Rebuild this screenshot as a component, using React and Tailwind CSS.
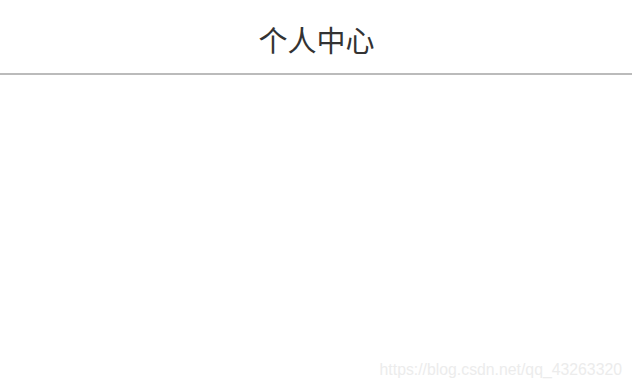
export default function App() {
  return (
    <div className="w-[632px] h-[390px] bg-white flex flex-col font-['Liberation_Sans','Noto_Sans_CJK_SC',sans-serif]">
      <header className="h-[75px] shrink-0 flex items-center justify-center border-b-2 border-[#bbbbbb]">
        <h1 className="text-[29px] leading-none text-[#333333] font-['Noto_Sans_CJK_SC',sans-serif] pt-[6px] pl-[1px]">个人中心</h1>
      </header>
      <main className="flex-1 flex items-end justify-end pr-[10px] pb-[8px]">
        <span className="text-[15.8px] text-[#ececec]">https://blog.csdn.net/qq_43263320</span>
      </main>
    </div>
  );
}
